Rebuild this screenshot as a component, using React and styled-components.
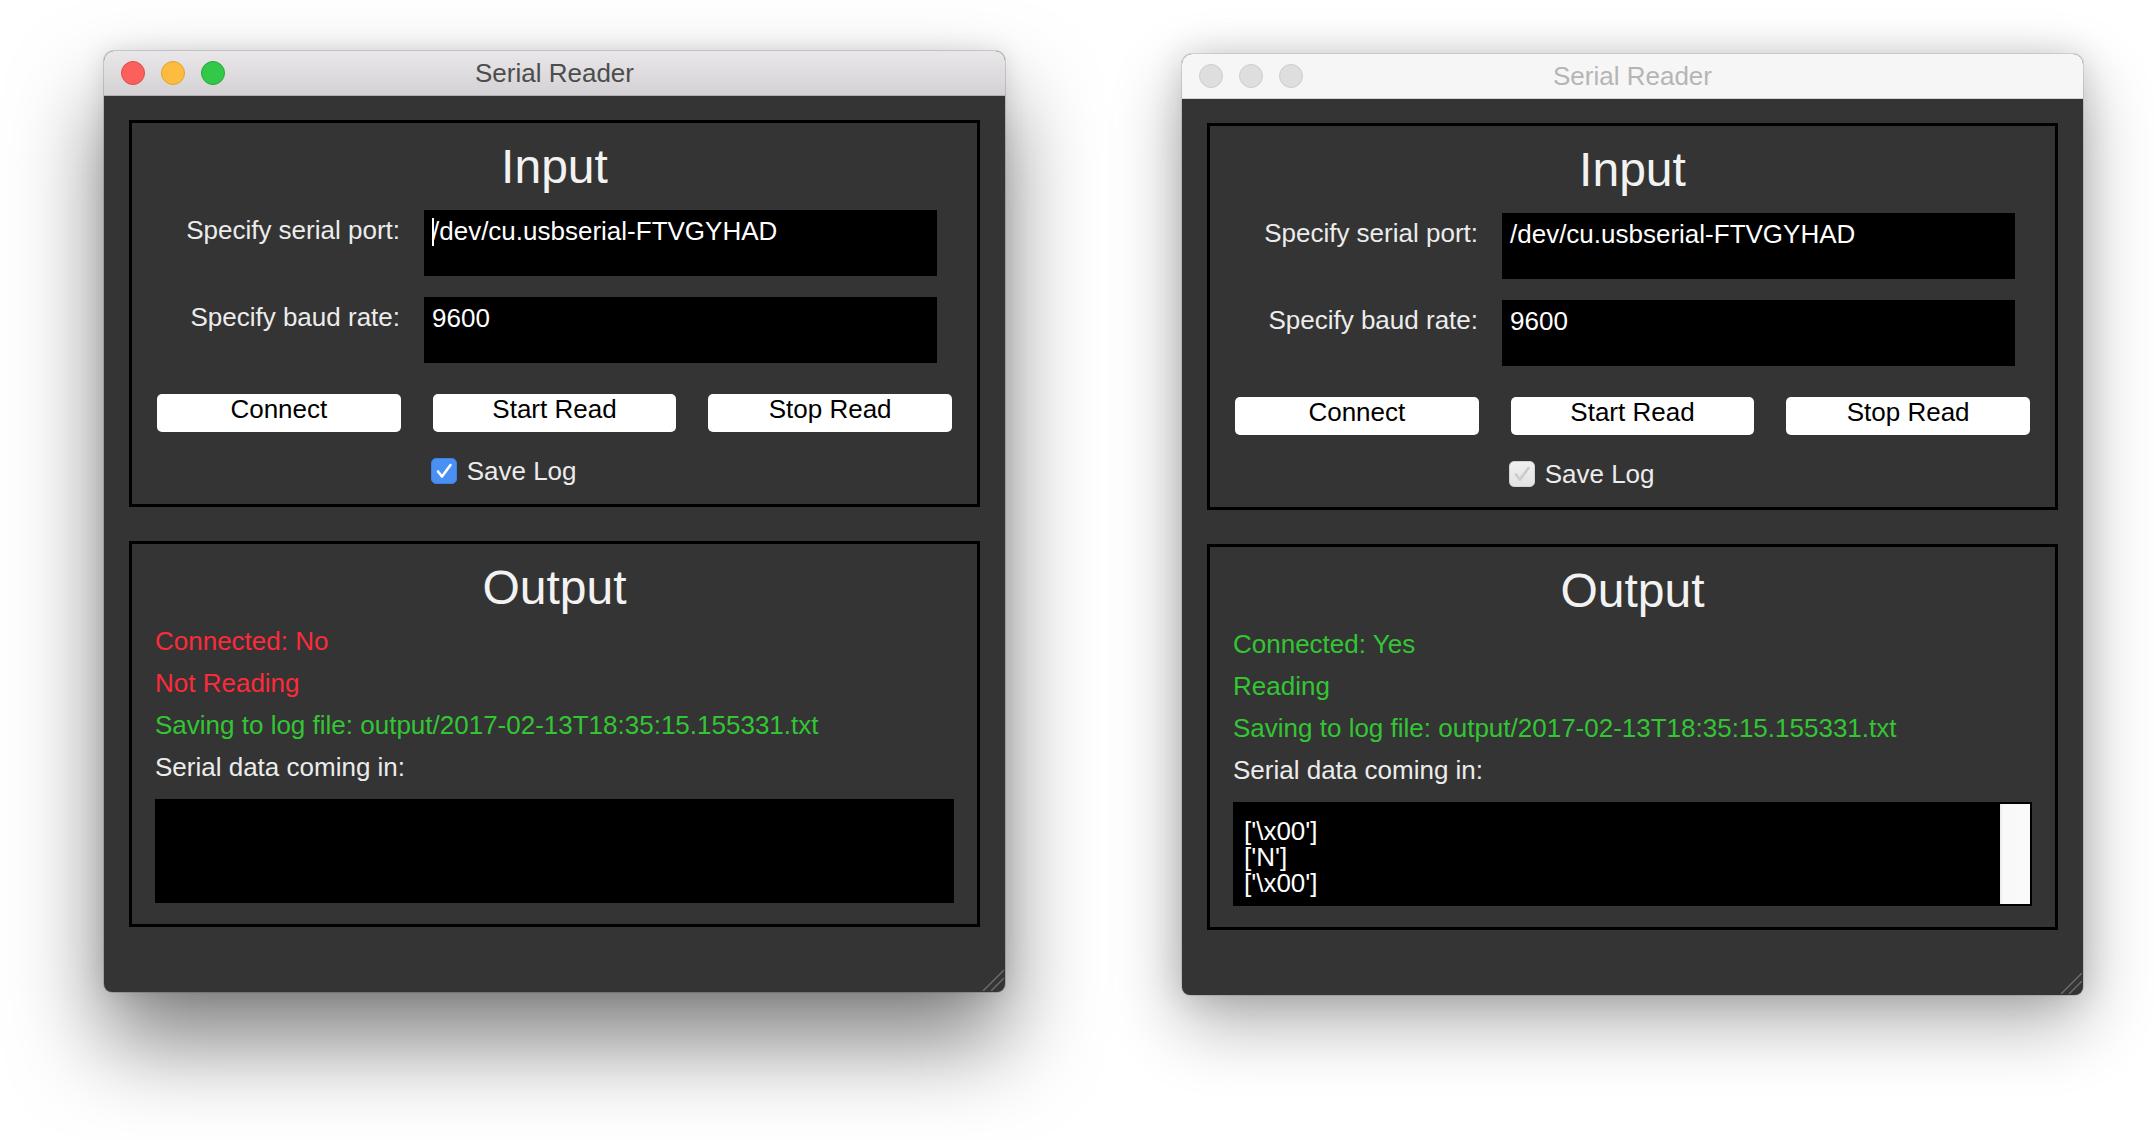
import React from 'react';
import styled, { createGlobalStyle } from 'styled-components';

const GlobalStyle = createGlobalStyle`
  html, body {
    margin: 0;
    padding: 0;
    background: #ffffff;
  }
  body {
    font-family: "Liberation Sans", Arial, Helvetica, sans-serif;
  }
`;

const windows = [
  {
    active: true,
    connected: false,
    reading: false,
    cursor: true,
    logFile: 'output/2017-02-13T18:35:15.155331.txt',
    data: null
  },
  {
    active: false,
    connected: true,
    reading: true,
    cursor: false,
    logFile: 'output/2017-02-13T18:35:15.155331.txt',
    data: ["['\\x00']", "['N']", "['\\x00']"]
  }
];

const lights = [
  { fill: '#fc605c', edge: '#de4a45' },
  { fill: '#fdbc40', edge: '#dea134' },
  { fill: '#34c84a', edge: '#27a737' }
];

function CheckMark({ color }) {
  return (
    <svg width="26" height="26" viewBox="0 0 26 26">
      <path d="M7 13.5 L11 18.5 L19.5 7" fill="none" stroke={color} strokeWidth="2.6" strokeLinecap="round" strokeLinejoin="round" />
    </svg>
  );
}

function ResizeGrip() {
  return (
    <Grip width="22" height="22" viewBox="0 0 22 22">
      <line x1="1" y1="22" x2="22" y2="1" stroke="#6c6c6c" strokeWidth="1.4" />
      <line x1="9" y1="22" x2="22" y2="9" stroke="#6c6c6c" strokeWidth="1.4" />
    </Grip>
  );
}

function SerialWindow({ win }) {
  const { active, connected, reading, cursor, logFile, data } = win;
  return (
    <Window $active={active}>
      <TitleBar $active={active}>
        <Lights>
          {lights.map((l, i) => (
            <Light key={i} $fill={active ? l.fill : '#dedede'} $edge={active ? l.edge : '#cdcdcd'} />
          ))}
        </Lights>
        <Title $active={active}>Serial Reader</Title>
      </TitleBar>
      <Content>
        <Frame $height={387}>
          <Heading>Input</Heading>
          <FormGrid>
            <Label>Specify serial port:</Label>
            <Field>
              {cursor && <Caret />}
              /dev/cu.usbserial-FTVGYHAD
            </Field>
            <Label>Specify baud rate:</Label>
            <Field>9600</Field>
          </FormGrid>
          <ButtonGrid>
            <Button>Connect</Button>
            <Button>Start Read</Button>
            <Button>Stop Read</Button>
            <span />
            <CheckRow>
              <CheckBox $active={active}>
                <CheckMark color={active ? '#ffffff' : '#cbcbcb'} />
              </CheckBox>
              <CheckText>Save Log</CheckText>
            </CheckRow>
          </ButtonGrid>
        </Frame>
        <Frame $height={386}>
          <Heading>Output</Heading>
          <StatusList>
            <Status $ok={connected}>{connected ? 'Connected: Yes' : 'Connected: No'}</Status>
            <Status $ok={reading}>{reading ? 'Reading' : 'Not Reading'}</Status>
            <Status $ok>Saving to log file: {logFile}</Status>
            <Status>Serial data coming in:</Status>
          </StatusList>
          <DataBox>
            <DataText>
              {data && data.map((line, i) => <div key={i}>{line}</div>)}
            </DataText>
            {data && <ScrollTrack />}
          </DataBox>
        </Frame>
      </Content>
      <ResizeGrip />
    </Window>
  );
}

export default function App() {
  return (
    <>
      <GlobalStyle />
      <Desktop>
        {windows.map((w, i) => (
          <SerialWindow key={i} win={w} />
        ))}
      </Desktop>
    </>
  );
}

const Desktop = styled.div`
  display: flex;
  align-items: flex-start;
  gap: 177px;
  padding: 51px 0 0 104px;
  min-height: 1140px;
  box-sizing: border-box;
`;

const Window = styled.div`
  position: relative;
  width: 901px;
  height: 941px;
  margin-top: ${p => (p.$active ? 0 : 3)}px;
  display: flex;
  flex-direction: column;
  background: #343434;
  border-radius: 10px 10px 8px 8px;
  overflow: hidden;
  box-shadow: ${p =>
    p.$active
      ? '0 50px 90px rgba(0,0,0,0.5), 0 0 0 1px rgba(0,0,0,0.14), 0 0 24px rgba(0,0,0,0.12)'
      : '0 28px 70px rgba(0,0,0,0.32), 0 0 0 1px rgba(0,0,0,0.1), 0 0 34px rgba(0,0,0,0.14)'};
`;

const TitleBar = styled.div`
  height: 44px;
  flex: none;
  display: grid;
  grid-template-columns: 1fr auto 1fr;
  align-items: center;
  padding: 0 17px;
  background: ${p => (p.$active ? 'linear-gradient(#e9e7e9, #d3d1d3)' : '#f6f6f6')};
  border-bottom: 1px solid ${p => (p.$active ? '#b3b1b3' : '#d4d4d4')};
`;

const Lights = styled.div`
  display: flex;
  gap: 16px;
`;

const Light = styled.span`
  width: 22px;
  height: 22px;
  border-radius: 50%;
  background: ${p => p.$fill};
  border: 1px solid ${p => p.$edge};
`;

const Title = styled.div`
  font-size: 26px;
  line-height: 44px;
  color: ${p => (p.$active ? '#4d4d4d' : '#b5b5b5')};
`;

const Content = styled.div`
  display: flex;
  flex-direction: column;
  gap: 34px;
  padding: 24px 25px 0;
`;

const Frame = styled.div`
  box-sizing: border-box;
  height: ${p => p.$height}px;
  border: 3px solid #000;
  padding-top: 16px;
  display: flex;
  flex-direction: column;
`;

const Heading = styled.h2`
  margin: 0;
  font-size: 48px;
  line-height: 55px;
  font-weight: normal;
  text-align: center;
  color: #f2f2f2;
`;

const FormGrid = styled.div`
  display: grid;
  grid-template-columns: 268px 513px;
  grid-auto-rows: 66px;
  column-gap: 24px;
  row-gap: 21px;
  margin-top: 16px;
`;

const Label = styled.div`
  text-align: right;
  font-size: 26px;
  line-height: 30px;
  padding-top: 5px;
  color: #ececec;
`;

const Field = styled.div`
  background: #000;
  color: #fff;
  font-size: 26px;
  line-height: 30px;
  padding: 6px 0 0 8px;
  white-space: nowrap;
`;

const Caret = styled.span`
  display: inline-block;
  width: 2px;
  height: 28px;
  background: #fff;
  vertical-align: -6px;
  margin-right: -2px;
`;

const ButtonGrid = styled.div`
  display: grid;
  grid-template-columns: repeat(3, 1fr);
  grid-template-rows: 38px 30px;
  column-gap: 32px;
  row-gap: 24px;
  padding: 0 25px;
  margin-top: 31px;
`;

const Button = styled.div`
  background: #fff;
  border-radius: 5px;
  color: #000;
  font-size: 26px;
  line-height: 30px;
  padding-bottom: 8px;
  text-align: center;
`;

const CheckRow = styled.label`
  display: flex;
  align-items: center;
  gap: 10px;
  margin-left: -2px;
`;

const CheckBox = styled.span`
  width: 26px;
  height: 26px;
  box-sizing: border-box;
  border-radius: 5px;
  display: flex;
  align-items: center;
  justify-content: center;
  background: ${p => (p.$active ? '#4a8ff2' : 'linear-gradient(#f0f0f0, #e2e2e2)')};
  border: 1px solid ${p => (p.$active ? '#3f80e0' : '#d2d2d2')};
  svg {
    margin: -1px;
  }
`;

const CheckText = styled.span`
  font-size: 26px;
  line-height: 30px;
  color: #ececec;
`;

const StatusList = styled.div`
  margin-top: 5px;
  padding: 0 23px;
`;

const Status = styled.div`
  font-size: 26px;
  line-height: 42px;
  white-space: nowrap;
  color: ${p => (p.$ok === undefined ? '#ececec' : p.$ok ? '#33c534' : '#fb2b3a')};
`;

const DataBox = styled.div`
  margin: 11px 23px 0;
  height: 104px;
  background: #000;
  display: flex;
`;

const DataText = styled.div`
  flex: 1;
  padding: 16px 11px 0;
  font-size: 26px;
  line-height: 26px;
  color: #fff;
`;

const ScrollTrack = styled.div`
  width: 30px;
  margin: 2px 2px 2px 0;
  background: linear-gradient(90deg, #e8e8e8 0, #f9f9f9 3px, #fafafa 100%);
`;

const Grip = styled.svg`
  position: absolute;
  right: 1px;
  bottom: 1px;
`;
